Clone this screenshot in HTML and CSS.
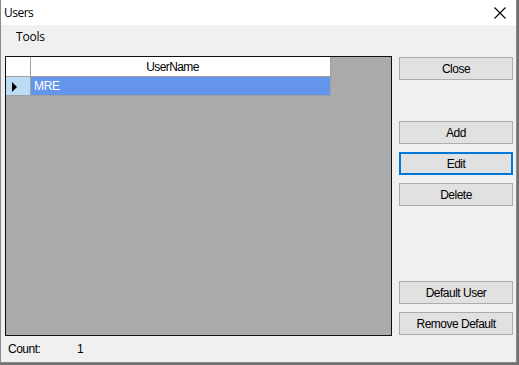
FILE: index.html
```html
<!DOCTYPE html>
<html>
<head>
<meta charset="utf-8">
<link rel="stylesheet" href="styles.css">
</head>
<body>
<div class="window">
  <div class="titlebar">
    <span class="title">Users</span>
    <svg class="close-x" width="12" height="12" viewBox="0 0 12 12"><path d="M0.5 0.5 L11.5 11.5 M11.5 0.5 L0.5 11.5" stroke="#000" stroke-width="1.1" fill="none"/></svg>
  </div>
  <div class="client">
    <div class="menubar"><span class="menu-item">Tools</span></div>
    <div class="main">
      <div class="left">
        <div class="grid">
          <div class="grid-row header">
            <div class="rowhead"></div>
            <div class="cell head-cell">UserName</div>
          </div>
          <div class="grid-row data">
            <div class="rowhead selected"><span class="arrow"></span></div>
            <div class="cell sel-cell">MRE</div>
          </div>
        </div>
        <div class="count"><span class="count-label">Count:</span><span class="count-val">1</span></div>
      </div>
      <div class="buttons">
        <button class="btn">Close</button>
        <button class="btn add">Add</button>
        <button class="btn focused">Edit</button>
        <button class="btn">Delete</button>
        <button class="btn default-user">Default User</button>
        <button class="btn">Remove Default</button>
      </div>
    </div>
  </div>
</div>
</body>
</html>
```
FILE: styles.css
```css
* { box-sizing: border-box; }
html, body { margin: 0; padding: 0; }
body {
  width: 519px;
  height: 365px;
  background: #707070;
  font-family: "Liberation Sans", Arial, sans-serif;
  overflow: hidden;
}
.window {
  width: 517px;
  height: 363px;
  border: 1px solid #8a8a8a;
  border-top: none;
  background: #f0f0f0;
  display: flex;
  flex-direction: column;
}
.titlebar {
  height: 25px;
  background: #fff;
  display: flex;
  align-items: center;
  justify-content: space-between;
  padding: 0 10px 1px 3px;
}
.title {
  font-family: "Open Sans", "Liberation Sans", sans-serif;
  font-size: 12px;
  letter-spacing: -0.5px;
  color: #000;
}
.close-x { display: block; margin-top: 1px; }
.client {
  flex: 1;
  display: flex;
  flex-direction: column;
}
.menubar {
  height: 24px;
  display: flex;
  align-items: center;
  padding-left: 15px;
  padding-bottom: 1px;
}
.menu-item {
  font-family: "Open Sans", "Liberation Sans", sans-serif;
  font-size: 12px;
  letter-spacing: -0.2px;
  color: #000;
}
.main {
  display: flex;
  padding: 7px 0 0 4px;
}
.left {
  display: flex;
  flex-direction: column;
}
.grid {
  width: 387px;
  height: 280px;
  border: 1px solid #111;
  background: #ababab;
}
.grid-row {
  display: flex;
}
.grid-row.header { height: 20px; }
.grid-row.data { height: 19px; }
.rowhead {
  width: 25px;
  border-right: 1px solid #a0a0a0;
  border-bottom: 1px solid #a0a0a0;
  background: #fff;
  display: flex;
  align-items: center;
  padding-left: 6px;
}
.rowhead.selected { background: #bcdcf4; }
.arrow {
  width: 0;
  height: 0;
  border-left: 5px solid #000;
  border-top: 5px solid transparent;
  border-bottom: 5px solid transparent;
  margin-top: 1px;
}
.cell {
  width: 300px;
  border-right: 1px solid #a0a0a0;
  border-bottom: 1px solid #a0a0a0;
  font-size: 12px;
  letter-spacing: -0.6px;
  display: flex;
  align-items: center;
}
.head-cell {
  background: #fff;
  justify-content: center;
  padding-right: 16px;
  color: #000;
}
.sel-cell {
  background: #6495ed;
  color: #fff;
  padding-left: 3px;
  letter-spacing: -0.3px;
}
.count {
  height: 26px;
  display: flex;
  align-items: center;
  font-size: 12px;
  letter-spacing: -0.5px;
  color: #000;
  padding-left: 3px;
  padding-bottom: 1px;
}
.count-label { width: 69px; }
.buttons {
  display: flex;
  flex-direction: column;
  margin-left: 7px;
  padding-top: 1px;
}
.btn {
  width: 114px;
  height: 23px;
  margin: 0 0 8px 0;
  padding: 0;
  background: #e1e1e1;
  border: 1px solid #adadad;
  font-family: "Liberation Sans", Arial, sans-serif;
  font-size: 12px;
  letter-spacing: -0.5px;
  color: #000;
}
.btn.add { margin-top: 33px; }
.btn.focused { border: 2px solid #0078d7; }
.btn.default-user { margin-top: 67px; }
```
